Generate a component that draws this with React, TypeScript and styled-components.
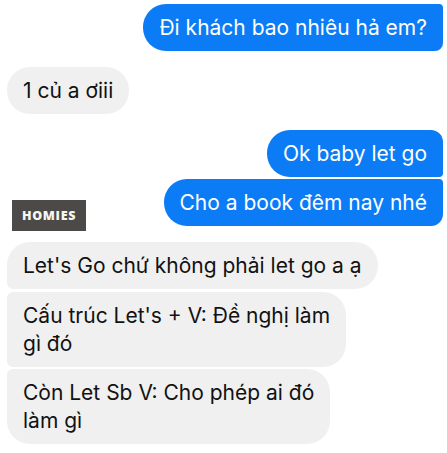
import React from "react";
import styled, { createGlobalStyle, css } from "styled-components";

const Global = createGlobalStyle`
  html, body { margin: 0; padding: 0; background: #ffffff; }
  body { font-family: Inter, "Noto Sans", "DejaVu Sans", sans-serif; }
`;

const Thread = styled.div`
  width: 447px;
  box-sizing: border-box;
  padding: 4px 4px 0 7px;
  display: flex;
  flex-direction: column;
`;

const Row = styled.div<{ $out?: boolean; $gap?: number }>`
  display: flex;
  justify-content: ${(p) => (p.$out ? "flex-end" : "flex-start")};
  align-items: flex-start;
  margin-top: ${(p) => p.$gap ?? 0}px;
`;

const LabelRow = styled(Row)`
  justify-content: space-between;
`;

type Corners = { tl: number; tr: number; br: number; bl: number };

const Bubble = styled.div<{ $out?: boolean; $c: Corners }>`
  box-sizing: border-box;
  padding: 9.5px 16px;
  font-size: 21px;
  line-height: 28px;
  letter-spacing: 0;
  white-space: nowrap;
  ${(p) =>
    p.$out
      ? css`
          background: #0b7cf6;
          color: #ffffff;
        `
      : css`
          background: #f0f0f0;
          color: #121212;
        `}
  border-radius: ${(p) => `${p.$c.tl}px ${p.$c.tr}px ${p.$c.br}px ${p.$c.bl}px`};
`;

const Badge = styled.div`
  margin-top: 21px;
  margin-bottom: -5px;
  margin-left: 5px;
  width: 74px;
  height: 31px;
  background: #4c4a49;
  color: #f6f6f2;
  display: flex;
  align-items: center;
  justify-content: center;
  font-family: "Open Sans", "DejaVu Sans", sans-serif;
  font-weight: 800;
  font-size: 12.5px;
  letter-spacing: 0.7px;
`;

const R = 23;

export default function App() {
  return (
    <>
      <Global />
      <Thread>
        <Row $out>
          <Bubble $out $c={{ tl: R, tr: 4, br: 8, bl: R }}>Đi khách bao nhiêu hả em?</Bubble>
        </Row>
        <Row $gap={16}>
          <Bubble $c={{ tl: R, tr: R, br: R, bl: R }}>1 củ a ơiii</Bubble>
        </Row>
        <Row $out $gap={16}>
          <Bubble $out $c={{ tl: R, tr: 12, br: 4, bl: R }}>Ok baby let go</Bubble>
        </Row>
        <LabelRow $gap={2}>
          <Badge>HOMIES</Badge>
          <Bubble $out $c={{ tl: R, tr: 4, br: 12, bl: R }}>Cho a book đêm nay nhé</Bubble>
        </LabelRow>
        <Row $gap={16}>
          <Bubble $c={{ tl: R, tr: R, br: R, bl: 6 }}>Let's Go chứ không phải let go a ạ</Bubble>
        </Row>
        <Row $gap={3}>
          <Bubble $c={{ tl: 6, tr: R, br: R, bl: 6 }}>
            Cấu trúc Let's + V: Đề nghị làm
            <br />
            gì đó
          </Bubble>
        </Row>
        <Row $gap={2}>
          <Bubble $c={{ tl: 6, tr: R, br: R, bl: R }}>
            Còn Let Sb V: Cho phép ai đó
            <br />
            làm gì
          </Bubble>
        </Row>
      </Thread>
    </>
  );
}
